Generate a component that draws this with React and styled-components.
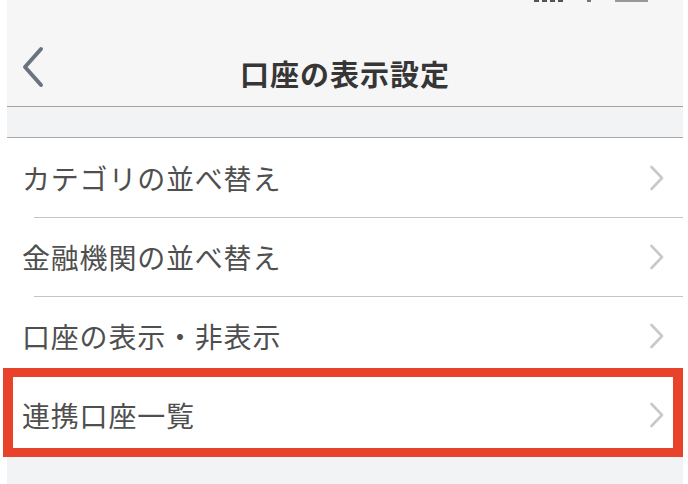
import styled, { createGlobalStyle } from "styled-components"

const GlobalStyle = createGlobalStyle`
  html, body {
    margin: 0;
    padding: 0;
    background: #ffffff;
  }
  body {
    font-family: "Noto Sans CJK JP", "Noto Sans", sans-serif;
  }
`

const Screen = styled.div`
  width: 676px;
  height: 484px;
  margin-left: 7px;
  background: #f2f3f5;
  overflow: visible;
`

const Header = styled.header`
  height: 106px;
  background: #f6f6f6;
  border-bottom: 1px solid #a3a3a3;
  display: flex;
  flex-direction: column;
`

const StatusBar = styled.div`
  height: 40px;
  display: flex;
  justify-content: flex-end;
  align-items: flex-start;
  gap: 24px;
  padding-right: 35px;
`

const Signal = styled.div`
  display: flex;
  gap: 3px;
  span {
    width: 5px;
    height: 2px;
    background: #555;
  }
`

const Wifi = styled.div`
  width: 4px;
  height: 2px;
  background: #777;
`

const Battery = styled.div`
  width: 33px;
  height: 2px;
  background: #999;
`

const NavBar = styled.div`
  flex: 1;
  display: grid;
  grid-template-columns: 80px 1fr 80px;
  align-items: center;
`

const BackButton = styled.button`
  border: none;
  background: none;
  padding: 0 0 12px 14px;
  display: flex;
  align-items: center;
  cursor: pointer;
`

const Title = styled.h1`
  margin: 0;
  text-align: center;
  font-size: 29px;
  font-weight: 700;
  color: #363636;
  letter-spacing: 1px;
`

const Band = styled.div`
  height: 30px;
  background: #f2f3f5;
  border-bottom: 1px solid #a8a8a8;
`

const List = styled.ul`
  list-style: none;
  margin: 0;
  padding: 0;
  background: #ffffff;
`

const Row = styled.li`
  position: relative;
  height: 79px;
  display: flex;
  align-items: center;
  justify-content: space-between;
  padding: 0 18px 0 15px;
  box-sizing: border-box;
  font-size: 28px;
  color: #4f4f4f;
  letter-spacing: 0.8px;

  & + &::before {
    content: "";
    position: absolute;
    top: 0;
    left: 27px;
    right: 0;
    height: 1px;
    background: #c4c4c4;
  }

  &::after {
    content: ${p => (p.$highlight ? '""' : "none")};
    position: absolute;
    top: -7px;
    bottom: -3px;
    left: -4px;
    right: 0;
    border: 10px solid #e9422a;
    border-top-width: 9px;
    border-bottom-width: 9px;
    z-index: 2;
  }
`

const BackIcon = () => (
  <svg width="26" height="42" viewBox="0 0 26 42">
    <path d="M20 3 L4 21 L20 39" fill="none" stroke="#6b7282" strokeWidth="4" strokeLinecap="round" strokeLinejoin="round" />
  </svg>
)

const Chevron = () => (
  <svg width="16" height="26" viewBox="0 0 16 26">
    <path d="M2.5 2 L13 13 L2.5 24" fill="none" stroke="#c9c9cd" strokeWidth="2.6" strokeLinecap="round" strokeLinejoin="round" />
  </svg>
)

const items = [
  "カテゴリの並べ替え",
  "金融機関の並べ替え",
  "口座の表示・非表示",
  "連携口座一覧",
]

function App() {
  return (
    <>
      <GlobalStyle />
      <Screen>
        <Header>
          <StatusBar>
            <Signal>
              <span /><span /><span /><span />
            </Signal>
            <Wifi />
            <Battery />
          </StatusBar>
          <NavBar>
            <BackButton aria-label="戻る">
              <BackIcon />
            </BackButton>
            <Title>口座の表示設定</Title>
            <div />
          </NavBar>
        </Header>
        <Band />
        <List>
          {items.map((label, i) => (
            <Row key={label} $highlight={i === items.length - 1}>
              <span>{label}</span>
              <Chevron />
            </Row>
          ))}
        </List>
      </Screen>
    </>
  )
}

export default App
